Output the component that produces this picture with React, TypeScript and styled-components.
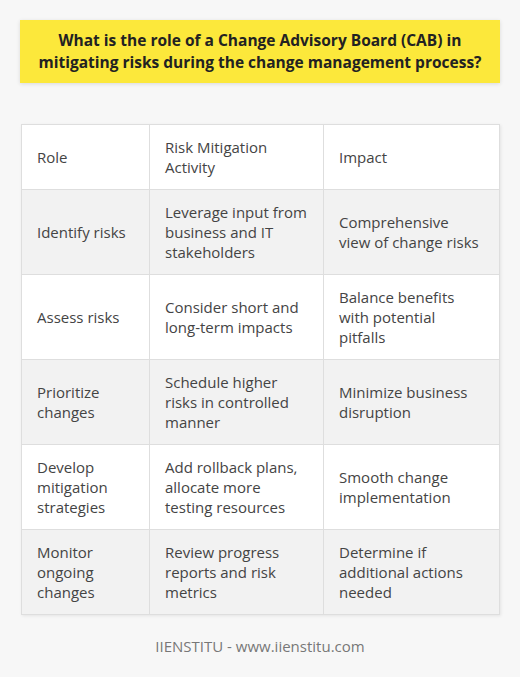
import React from 'react';
import styled, { createGlobalStyle } from 'styled-components';

const GlobalStyle = createGlobalStyle`
  html, body {
    margin: 0;
    padding: 0;
    background: #f7f7f7;
  }
  body {
    font-family: "Open Sans", "Liberation Sans", sans-serif;
  }
`;

const Page = styled.div`
  width: 520px;
  height: 677px;
  box-sizing: border-box;
  padding: 20px 20px 0 20px;
  display: flex;
  flex-direction: column;
`;

const TitleBox = styled.div`
  background: #fce83b;
  box-shadow: 0 1px 4px rgba(0, 0, 0, 0.12);
  padding: 10px 4px;
  text-align: center;
  font-weight: 700;
  font-size: 15.5px;
  line-height: 21.5px;
  color: #222;
`;

const Table = styled.table`
  margin: 41px 1px 0 1px;
  border-collapse: collapse;
  table-layout: fixed;
  width: 478px;
  background: #fff;
  box-shadow: 1px 1px 3px rgba(0, 0, 0, 0.08);
`;

const Row = styled.tr<{ $shaded: boolean }>`
  background: ${({ $shaded }) => ($shaded ? '#f2f2f2' : '#ffffff')};
`;

const Cell = styled.td<{ $last?: boolean }>`
  border: 1px solid #dedede;
  padding: 12px ${({ $last }) => ($last ? '20px' : '15px')} 12px 15px;
  font-size: 15px;
  line-height: 20px;
  color: #444;
  vertical-align: middle;
  text-align: left;
`;

const Footer = styled.div`
  margin-top: 21px;
  text-align: center;
  font-size: 15px;
  color: #777;
`;

const rows: [string, string, string][] = [
  ['Role', 'Risk Mitigation Activity', 'Impact'],
  ['Identify risks', 'Leverage input from business and IT stakeholders', 'Comprehensive view of change risks'],
  ['Assess risks', 'Consider short and long-term impacts', 'Balance benefits with potential pitfalls'],
  ['Prioritize changes', 'Schedule higher risks in controlled manner', 'Minimize business disruption'],
  ['Develop mitigation strategies', 'Add rollback plans, allocate more testing resources', 'Smooth change implementation'],
  ['Monitor ongoing changes', 'Review progress reports and risk metrics', 'Determine if additional actions needed'],
];

export default function App() {
  return (
    <>
      <GlobalStyle />
      <Page>
        <TitleBox>
          What is the role of a Change Advisory Board (CAB) in mitigating risks during the change management process?
        </TitleBox>
        <Table>
          <colgroup>
            <col style={{ width: 128 }} />
            <col style={{ width: 174 }} />
            <col style={{ width: 176 }} />
          </colgroup>
          <tbody>
            {rows.map((r, i) => (
              <Row key={i} $shaded={i % 2 === 1}>
                {r.map((c, j) => (
                  <Cell key={j} $last={j === 2}>{c}</Cell>
                ))}
              </Row>
            ))}
          </tbody>
        </Table>
        <Footer>IIENSTITU - www.iienstitu.com</Footer>
      </Page>
    </>
  );
}
